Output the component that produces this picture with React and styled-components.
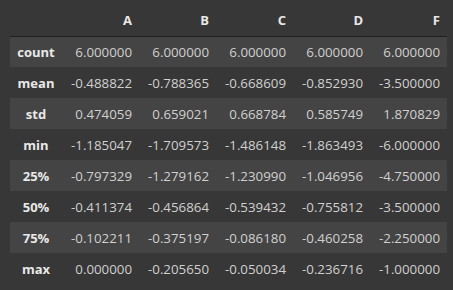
import React from "react";
import styled, { createGlobalStyle } from "styled-components";

const Global = createGlobalStyle`
  html, body { margin: 0; padding: 0; background: #373737; }
  body { font-family: "Open Sans", "Noto Sans", sans-serif; }
  *, *::before, *::after { box-sizing: border-box; }
`;

const Wrap = styled.div`
  padding: 4px 6px 0 10px;
`;

const Table = styled.table`
  border-collapse: collapse;
  border-spacing: 0;
  table-layout: fixed;
  width: 437px;
  font-size: 13.3px;
  color: #d0d0d0;
`;

const HeadCell = styled.th`
  height: 32px;
  padding: 0 7px 0 0;
  text-align: right;
  font-weight: 700;
  font-size: 13px;
  color: #e8e8e8;
  border-bottom: 1px solid #1f1f1f;
  width: ${(p) => (p.$index ? "52px" : "77px")};
`;

const Row = styled.tr`
  background: ${(p) => (p.$striped ? "#444444" : "transparent")};
`;

const IndexCell = styled.th`
  height: 31px;
  padding: 0;
  text-align: center;
  font-weight: 700;
  font-size: 13px;
  color: #e8e8e8;
`;

const Cell = styled.td`
  height: 31px;
  padding: 0 7px 0 0;
  text-align: right;
  white-space: nowrap;
`;

const columns = ["A", "B", "C", "D", "F"];
const rows = [
  ["count", "6.000000", "6.000000", "6.000000", "6.000000", "6.000000"],
  ["mean", "-0.488822", "-0.788365", "-0.668609", "-0.852930", "-3.500000"],
  ["std", "0.474059", "0.659021", "0.668784", "0.585749", "1.870829"],
  ["min", "-1.185047", "-1.709573", "-1.486148", "-1.863493", "-6.000000"],
  ["25%", "-0.797329", "-1.279162", "-1.230990", "-1.046956", "-4.750000"],
  ["50%", "-0.411374", "-0.456864", "-0.539432", "-0.755812", "-3.500000"],
  ["75%", "-0.102211", "-0.375197", "-0.086180", "-0.460258", "-2.250000"],
  ["max", "0.000000", "-0.205650", "-0.050034", "-0.236716", "-1.000000"],
];

export default function App() {
  return (
    <>
      <Global />
      <Wrap>
        <Table>
          <thead>
            <tr>
              <HeadCell $index></HeadCell>
              {columns.map((c) => (
                <HeadCell key={c}>{c}</HeadCell>
              ))}
            </tr>
          </thead>
          <tbody>
            {rows.map((r, i) => (
              <Row key={r[0]} $striped={i % 2 === 0}>
                <IndexCell>{r[0]}</IndexCell>
                {r.slice(1).map((v, j) => (
                  <Cell key={j}>{v}</Cell>
                ))}
              </Row>
            ))}
          </tbody>
        </Table>
      </Wrap>
    </>
  );
}
